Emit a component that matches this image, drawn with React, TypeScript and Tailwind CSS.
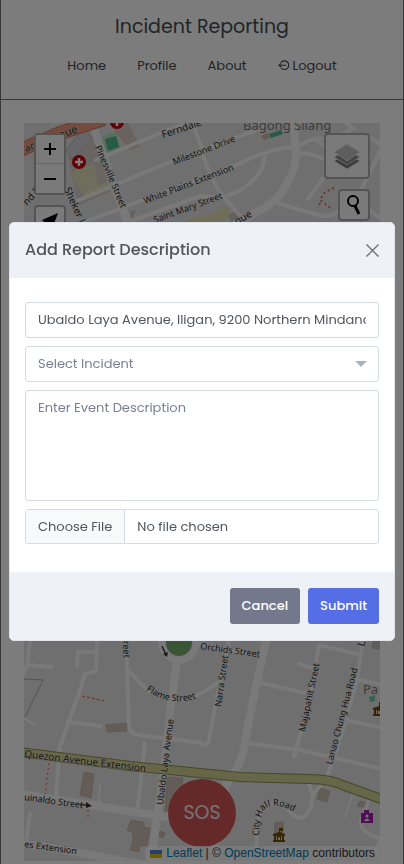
import { useState } from "react";

type Label = { text: string; x: number; y: number; angle: number; size?: number };

const streetLabels: Label[] = [
  { text: "acr", x: 26, y: 152, angle: -22 },
  { text: "enue", x: 54, y: 141, angle: -20, size: 11 },
  { text: "Pinesville Street", x: 95, y: 147, angle: 67, size: 9 },
  { text: "Ferndale", x: 163, y: 138, angle: -18 },
  { text: "Milestone Drive", x: 174, y: 165, angle: -21, size: 9 },
  { text: "White Plains Extension", x: 145, y: 204, angle: -21, size: 9 },
  { text: "Saint Mary Street", x: 155, y: 223, angle: -20, size: 9 },
  { text: "que", x: 237, y: 225, angle: -30 },
  { text: "nd E", x: 27, y: 206, angle: -48 },
  { text: "Sheker L", x: 64, y: 189, angle: 66 },
  { text: "Orchids Street", x: 200, y: 649, angle: 8, size: 9 },
  { text: "Narra Street", x: 221, y: 707, angle: -82, size: 9 },
  { text: "Majapahit Street", x: 305, y: 732, angle: -78, size: 9 },
  { text: "Lanao Chung Hua Road", x: 332, y: 765, angle: -75, size: 9 },
  { text: "La", x: 364, y: 647, angle: -75 },
  { text: "Quezon Avenue Extension", x: 24, y: 757, angle: 7, size: 10 },
  { text: "uinaldo Street", x: 24, y: 800, angle: 8, size: 9 },
  { text: "es Extension", x: 24, y: 847, angle: 8, size: 9 },
  { text: "Ubaldo Laya Avenue", x: 163, y: 805, angle: -83, size: 9 },
  { text: "reet", x: 123, y: 641, angle: 88, size: 9 },
];

const wideRoads = [
  "M293 120 L296 150 Q297 168 285 187 Q277 203 255 213 L235 225",
  "M93 126 L113 183 L130 228",
  "M177 660 L171 705 L165 760 L151 862",
  "M266 640 L252 705 L243 752 Q238 770 226 785 L214 850",
  "M20 794 L60 800 L160 816 L202 821",
  "M20 843 L75 852 L140 864",
];

const roads = [
  "M96 160 L160 133 L200 118 M192 122 L202 148",
  "M72 203 L160 166 L235 138 L265 127",
  "M76 225 L135 203 L235 166 Q268 148 296 147",
  "M112 228 L200 196 L225 197",
  "M265 153 Q265 182 225 197",
  "M202 152 Q212 184 224 197 L247 224",
  "M296 149 Q312 134 332 140 L350 130 M316 140 L332 152",
  "M298 153 Q320 153 332 166 L308 199",
  "M275 202 Q305 212 323 216 Q336 217 348 203",
  "M342 120 L354 129 M380 152 L360 192 Q368 214 382 218 M371 138 L382 146",
  "M30 640 L27 665 L22 677 M28 665 L52 667",
  "M97 640 L96 671 L85 674 L80 690 L57 755",
  "M94 652 L78 652 L77 666 M68 722 L101 726",
  "M126 640 L129 725 Q129 734 138 735 L202 743",
  "M129 671 L147 690 Q172 706 200 694 L218 683",
  "M144 743 L144 752 M60 744 L56 797 M145 744 L137 812",
  "M200 644 L258 655 M229 640 L215 707 L209 740 Q208 745 202 745",
  "M261 683 L305 693 M299 664 L312 668 M357 654 L319 645 L310 695 L295 755",
  "M363 640 L357 680 L340 740 L326 780 M356 679 L382 685 M346 720 L382 728",
  "M247 743 L300 750 L382 769 M298 740 L294 756",
  "M257 850 L256 830 Q258 802 281 803 L292 814 Q304 824 311 807 L313 795 L309 784",
  "M326 779 L315 792 M369 800 L361 820 Q358 832 382 839 M382 835 L375 855",
  "M30 813 L26 843",
];

function Hospital({ x, y }: { x: number; y: number }) {
  return (
    <g transform={`translate(${x} ${y})`}>
      <circle r="7" fill="#c80008" />
      <path d="M0 -4 V4 M-4 0 H4" stroke="#fff" strokeWidth="2.4" />
    </g>
  );
}

function TownHall({ x, y }: { x: number; y: number }) {
  return (
    <path
      transform={`translate(${x} ${y})`}
      fill="#734a08"
      d="M-6 6 H6 V4 H5 V0 H6 V-2 L1 -4 V-5 H4 V-8 H0 V-4 L-6 -2 V0 H-5 V4 H-6 Z M-3 0 H-2 V4 H-3 Z M-1 1 H1 V4 H-1 Z M2 0 H3 V4 H2 Z"
      fillRule="evenodd"
    />
  );
}

function StreetMap() {
  return (
    <svg
      className="absolute inset-0 size-full"
      viewBox="24 123 356 738"
      preserveAspectRatio="xMidYMin slice"
      role="img"
      aria-label="Street map"
    >
      <rect x="0" y="100" width="404" height="770" fill="#dedede" />
      <path d="M67 152 L88 128 L108 165 L110 192 L78 205 Z" fill="#d5cbc4" />
      <path d="M66 150 L82 130 L92 138 L72 160 Z" fill="#cfcfd4" stroke="#b9b9b9" />
      <path d="M112 128 L128 123 L140 146 L130 150 Z" fill="#d2c4bc" />
      <path d="M70 173 L94 164 L98 186 L83 193 Z" fill="#deddb8" />
      <path d="M83 193 L108 182 L109 190 L86 198 Z" fill="#e4e4b8" />
      <path d="M202 219 L226 206 L233 215 L215 226 L202 226 Z M178 224 L204 214 L204 226 Z" fill="#dcdcb0" />
      <path d="M228 215 L236 211 L240 217 L231 222 Z M130 212 L136 210 L132 219 Z" fill="#cbbfb5" />
      <path d="M100 138 L116 131 L121 148 L106 154 Z" fill="#b9dcb9" />
      <path d="M105 139 L116 136 L119 147 L108 151 Z" fill="#4fb58e" />
      <path d="M269 134 L281 130 L283 134 L271 138 Z" fill="#4fb58e" />
      <path d="M261 136 L268 133 L270 138 L264 140 Z" fill="#c9b4a6" />

      <g fill="#c6b9ae" stroke="#b3a497" strokeWidth="0.6">
        <path d="M106 725 L127 723 V731 L107 732 Z" />
        <path d="M84 772 L94 774 L91 798 L80 795 Z" />
        <path d="M131 820 L144 822 V827 L150 828 L147 847 L139 845 V852 L130 850 L133 840 V833 L127 830 Z" />
        <path d="M167 777 L183 778 L181 800 L165 812 Z" />
        <path d="M320 788 L330 791 L327 802 L317 799 Z" />
        <path d="M373 641 H382 V650 L372 648 Z M275 823 L283 822 V838 H274 Z" />
        <path d="M360 801 L368 803 L367 808 L357 806 Z M160 831 L165 833 L163 838 L158 836 Z" />
      </g>

      <g fill="none" stroke="#f2f2f2" strokeLinecap="round" strokeLinejoin="round">
        {roads.map((d) => (
          <path key={d} d={d} strokeWidth="4" />
        ))}
        {wideRoads.map((d) => (
          <path key={d} d={d} strokeWidth="8" />
        ))}
        <path d="M100 784 L99 803 M24 718 L35 725 M352 796 L345 817" strokeWidth="2" />
        <circle cx="179" cy="643" r="17" strokeWidth="7" />
      </g>
      <path d="M20 150 L60 133 L104 119" stroke="#c87860" strokeWidth="14" fill="none" />
      <path d="M20 150 L60 133 L104 119" stroke="#e8967a" strokeWidth="12" fill="none" />
      <circle cx="179" cy="643" r="12.5" fill="#70ad67" stroke="#8a9c86" />
      <path d="M162 646 L166 655" stroke="#333" strokeWidth="1.4" />
      <path d="M163 654 L168 652 L167 657 Z" fill="#333" />

      <path
        d="M20 752 L130 766 Q200 773 240 777 L310 779 Q330 779 345 786 L384 800"
        fill="none"
        stroke="#8e8f4a"
        strokeWidth="10"
      />
      <path
        d="M20 752 L130 766 Q200 773 240 777 L310 779 Q330 779 345 786 L384 800"
        fill="none"
        stroke="#cdcf92"
        strokeWidth="8"
      />
      <path d="M24 679 L43 680 L25 717" fill="none" stroke="#999" strokeWidth="0.8" />
      <g fill="none" stroke="#e06a55" strokeWidth="1.2" strokeDasharray="3 2">
        <path d="M82 696 L104 701" />
        <path d="M49 763 L45 794 M88 810 L88 818" strokeDasharray="2 3" />
        <path d="M334 188 L325 192 L320 200 L332 209 M320 203 L318 208" strokeDasharray="2 3" strokeWidth="2" />
      </g>

      <g
        fontFamily="'Noto Sans', sans-serif"
        fill="#2c2c2c"
        stroke="#e6e6e6"
        strokeWidth="1"
        strokeOpacity="0.6"
        paintOrder="stroke"
        strokeLinejoin="round"
      >
        {streetLabels.map((l) => (
          <text
            key={l.text}
            fontSize={l.size ?? 10}
            transform={`translate(${l.x} ${l.y}) rotate(${l.angle})`}
          >
            {l.text}
          </text>
        ))}
        <path id="flame" d="M146 690 Q170 708 200 697" fill="none" stroke="none" />
        <text fontSize="9">
          <textPath href="#flame">Flame Street</textPath>
        </text>
        <path id="cityhall" d="M259 836 Q259 806 272 806 Q281 804 298 814" fill="none" stroke="none" />
        <text fontSize="9">
          <textPath href="#cityhall">City Hall Road</textPath>
        </text>
        <g fill="#777">
          <text x="243" y="130" fontSize="13">Bagong Silang</text>
          <text x="363" y="694" fontSize="13">Pa</text>
        </g>
      </g>
      <path d="M80 805 H88" stroke="#333" strokeWidth="1.3" />
      <path d="M86 802 L92 806 L86 808 Z" fill="#333" />
      <Hospital x={79} y={162} />
      <Hospital x={117} y={122} />
      <TownHall x={279} y={836} />
      <TownHall x={379} y={710} />
      <path d="M369 697 L375 695 V701 L370 702 Z" fill="#6fc2a0" />
      <path d="M361 813 H364 V810 H369 V813 H373 V823 H361 Z" fill="#a21ab0" />
      <circle cx="367" cy="816" r="1.5" fill="#eee" />
      <path d="M364 821 Q367 816 370 821 Z" fill="#eee" />
    </svg>
  );
}

function LogoutIcon() {
  return (
    <svg className="size-3" viewBox="0 0 12 12" fill="none" stroke="currentColor" strokeWidth="1.1" aria-hidden="true">
      <path d="M3 2.6 A4.3 4.3 0 1 1 3 7.8" />
      <path d="M8 5.2 H1 M3 3.4 L1 5.2 L3 7" />
    </svg>
  );
}

const control = "flex items-center justify-center bg-[#f4f4f4] text-black";
const frame = "border-2 border-[#a8a8a8] rounded-sm";
const field = "block w-full rounded-[3px] border border-[#d5dce3] bg-white text-[13px]";

export default function App() {
  const [open, setOpen] = useState(true);
  const [address, setAddress] = useState("Ubaldo Laya Avenue, Iligan, 9200 Northern Mindanao, Philippines");

  return (
    <div className="flex min-h-screen flex-col border-x border-x-[#707070] bg-[#f8f8f8] font-['Poppins',Inter,sans-serif]">
      <header className="pt-3 text-[#43484e]">
        <h1 className="text-center text-[19px] leading-[30px]">Incident Reporting</h1>
        <nav className="flex justify-center gap-[31px] pt-[14px] pb-[23px] text-[13px] leading-5">
          <a href="#home">Home</a>
          <a href="#profile">Profile</a>
          <a href="#about">About</a>
          <a href="#logout" className="flex items-center gap-[3px]">
            <LogoutIcon />
            Logout
          </a>
        </nav>
        <hr className="h-px border-0 bg-[#ff2a2a]" />
      </header>

      <main className="flex flex-1 flex-col px-[23px] pt-[23px] pb-[3px]">
        <div className="relative flex flex-1 flex-col justify-between overflow-hidden">
          <StreetMap />
          <div className="relative flex items-start justify-between px-2.5 pt-2.5">
            <div className="flex flex-col gap-2.5">
              <div className={`${frame} w-8`}>
                <button type="button" aria-label="Zoom in" className={`${control} h-[29px] w-full border-b border-[#ccc]`}>
                  <svg className="size-3" viewBox="0 0 12 12" stroke="currentColor" strokeWidth="2"><path d="M0 6 H12 M6 0 V12" /></svg>
                </button>
                <button type="button" aria-label="Zoom out" className={`${control} h-[29px] w-full`}>
                  <svg className="size-3" viewBox="0 0 12 12" stroke="currentColor" strokeWidth="2"><path d="M0 6 H12" /></svg>
                </button>
              </div>
              <button type="button" aria-label="Locate me" className={`${control} ${frame} size-8`}>
                <svg className="size-4" viewBox="0 0 16 16" fill="currentColor"><path d="M16 0 L0 7 L2 9 L7 9 L8 15 L10 16 Z" /></svg>
              </button>
            </div>
            <div className="flex flex-col items-end gap-2.5">
              <button type="button" aria-label="Layers" className={`${control} ${frame} h-[46px] w-[46px]`}>
                <svg className="size-7" viewBox="0 0 28 28">
                  <path d="M1 19 L14 12 L27 19 L14 27 Z" fill="#777" stroke="#eee" strokeWidth="0.7" />
                  <path d="M1 15 L14 8 L27 15 L14 23 Z" fill="#888" stroke="#eee" strokeWidth="0.7" />
                  <path d="M1 10 L14 2 L27 10 L14 19 Z" fill="#bdbdbd" stroke="#eee" strokeWidth="0.7" />
                </svg>
              </button>
              <button type="button" aria-label="Search" className={`${control} ${frame} size-8`}>
                <svg className="h-5 w-4" viewBox="0 0 16 20" fill="none" stroke="currentColor">
                  <circle cx="7" cy="6" r="5" strokeWidth="2" />
                  <path d="M9 11 L13 19" strokeWidth="3" />
                </svg>
              </button>
            </div>
          </div>
          <div className="relative">
            <button type="button" className="mx-auto block size-[68px] rounded-full bg-[#cc5252] text-[19px] text-[#e8e8e8]">
              SOS
            </button>
            <div className="mt-[-1px] flex justify-end">
              <p className="flex items-center bg-white/60 px-[5px] font-['Liberation_Sans',sans-serif] text-[12px] leading-[15px] whitespace-pre text-[#333]">
                <svg className="mr-1 h-2 w-3" viewBox="0 0 12 8" aria-hidden="true">
                  <path d="M0 0 H12 V4 H0 Z" fill="#4c7be1" />
                  <path d="M0 4 H12 V8 H0 Z" fill="#e0b800" />
                </svg>
                <a href="#leaflet" className="text-[#0078a8]">Leaflet</a>
                {" | © "}
                <a href="#osm" className="text-[#0078a8]">OpenStreetMap</a>
                {" contributors"}
              </p>
            </div>
          </div>
        </div>
      </main>

      {open && (
        <div className="fixed inset-0 flex items-center justify-center bg-black/50 px-[9px]">
          <form
            role="dialog"
            aria-labelledby="report-title"
            onSubmit={(e) => e.preventDefault()}
            className="mb-0.5 w-full max-w-[500px] overflow-hidden rounded-[5px] border border-[#e2e6ea] bg-white text-[#50565c]"
          >
            <div className="flex h-[55px] items-center justify-between bg-[#eef2f7] px-[15px]">
              <h2 id="report-title" className="text-[16px] font-medium">Add Report Description</h2>
              <button type="button" aria-label="Close" onClick={() => setOpen(false)} className="text-[#6c6f73]">
                <svg className="size-[13px]" viewBox="0 0 13 13" fill="none" stroke="currentColor" strokeWidth="1.4">
                  <path d="M0.5 0.5 L12.5 12.5 M12.5 0.5 L0.5 12.5" />
                </svg>
              </button>
            </div>

            <div className="flex flex-col gap-2 px-[15px] pt-6 pb-7">
              <input
                aria-label="Address"
                value={address}
                onChange={(e) => setAddress(e.target.value)}
                className={`${field} h-9 px-3`}
              />
              <div className="relative">
                <select aria-label="Incident" className={`${field} h-9 appearance-none px-3 text-[#7a7f96]`}>
                  <option>Select Incident</option>
                </select>
                <svg className="pointer-events-none absolute top-[15px] right-3 h-1.5 w-3" viewBox="0 0 12 6" fill="#a9b5bd">
                  <path d="M0 0 H12 L6 6 Z" />
                </svg>
              </div>
              <textarea
                aria-label="Event description"
                placeholder="Enter Event Description"
                className={`${field} h-[111px] resize-none px-3 py-[7px] leading-5 placeholder:text-[#7a7f96]`}
              />
              <input
                type="file"
                aria-label="Attachment"
                className={`${field} h-[35px] leading-[33px] file:mr-3 file:h-[33px] file:border-0 file:border-r file:border-solid file:border-[#d5dce3] file:bg-[#f8f9fb] file:px-3 file:text-[13px] file:text-[#50565c]`}
              />
            </div>

            <div className="flex h-[68px] items-center justify-end gap-2 bg-[#eef2f7] px-[15px] text-[13px] font-medium text-white">
              <button type="button" onClick={() => setOpen(false)} className="h-9 rounded-[3px] bg-[#74788d] px-3">
                Cancel
              </button>
              <button type="submit" className="h-9 rounded-[3px] bg-[#556ee6] px-3">
                Submit
              </button>
            </div>
          </form>
        </div>
      )}
    </div>
  );
}
